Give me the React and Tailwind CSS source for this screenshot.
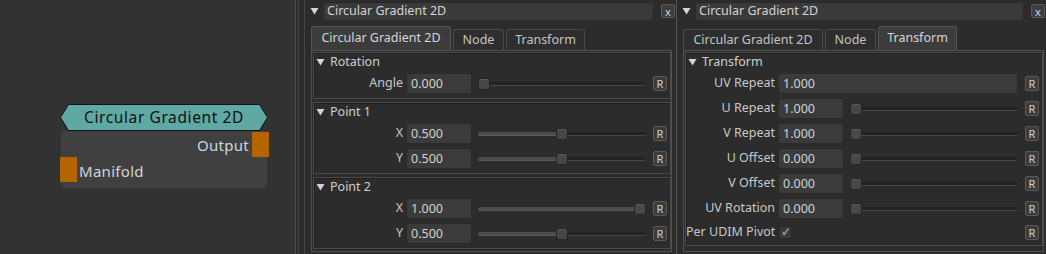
const Tri = () => (
  <svg width="9" height="8" viewBox="0 0 9 8" className="shrink-0">
    <path d="M0.5 1 L8.5 1 L4.5 7.5 Z" fill="#d4d4d4" />
  </svg>
);

const RBtn = () => (
  <div className="w-[14px] h-[15px] shrink-0 rounded-[2px] border border-[#5a5a5a] bg-[#3c3c3c] text-[#d0d0d0] text-[11px] leading-[13px] flex items-center justify-center">
    R
  </div>
);

const Slider = ({ pos }) => (
  <div className="relative flex-1 h-[14px] flex items-center">
    <div className="w-full h-[4px] rounded-full bg-[#222] border-b border-[#4a4a4a]" />
    <div
      className="absolute h-[4px] left-0 rounded-full bg-[#4c4c4c] border-b border-[#5a5a5a]"
      style={{ width: `${pos * 100}%` }}
    />
    <div
      className="absolute top-[1px] w-[12px] h-[12px] rounded-[3px] bg-[#474747] border border-[#252525] shadow-[inset_0_1px_0_#5c5c5c]"
      style={{ left: `calc(${pos * 100}% - ${pos * 12}px)` }}
    />
  </div>
);

const Field = ({ value, wide }) => (
  <div
    className={`${wide ? "flex-1" : "w-[66px]"} h-[21px] shrink-0 rounded-[2px] bg-[#3b3b3b] border border-[#2a2a2a] text-[#d2d2d2] text-[12.5px] flex items-center pl-[4px] pt-[2px]`}
  >
    {value}
  </div>
);

const Row = ({ label, value, pos, wide, h = "h-[25px]" }) => (
  <div className={`flex items-center ${h} pr-[3px]`}>
    <div className="w-[89px] shrink-0 text-right text-[#c8c8c8] text-[12.5px] whitespace-nowrap">
      {label}
    </div>
    <div className="w-[3px] shrink-0" />
    <Field value={value} wide={wide} />
    {!wide && (
      <>
        <div className="w-[6px] shrink-0" />
        <Slider pos={pos} />
      </>
    )}
    <div className="w-[7px] shrink-0" />
    <RBtn />
  </div>
);

const Group = ({ title, children }) => (
  <div className="border border-[#4c4c4c] shadow-[inset_1px_1px_0_#1f1f1f] pb-[2px]">
    <div className="h-[18px] flex items-center gap-[5px] pl-[2px] text-[#cfcfcf] text-[12.5px]">
      <Tri />
      <span>{title}</span>
    </div>
    {children}
  </div>
);

const Tabs = ({ active }) => {
  const tabs = [
    ["Circular Gradient 2D", "w-[140px]"],
    ["Node", "w-[51px]"],
    ["Transform", "w-[79px]"],
  ];
  return (
    <div className="flex items-end gap-[2px] h-[24px]">
      {tabs.map(([t, w], i) =>
        i === active ? (
          <div
            key={t}
            className={`${w} h-[24px] flex items-center justify-center rounded-t-[3px] border border-b-0 border-[#555] bg-[#3c3c3c] text-[#d6d6d6] text-[12.5px]`}
          >
            {t}
          </div>
        ) : (
          <div
            key={t}
            className={`${w} h-[21px] flex items-center justify-center rounded-t-[3px] border border-b-0 border-[#4a4a4a] bg-[#2e2e2e] text-[#c4c4c4] text-[12.5px]`}
          >
            {t}
          </div>
        ),
      )}
    </div>
  );
};

const Header = () => (
  <div className="flex items-center h-[20px] mt-[1px]">
    <div className="w-[14px] shrink-0 flex justify-start pl-[1px]">
      <Tri />
    </div>
    <div className="flex-1 h-[19px] rounded-[3px] bg-[#3a3a3a] border border-[#2a2a2a] text-[#d4d4d4] text-[12.5px] flex items-center pl-[3px]">
      Circular Gradient 2D
    </div>
    <div className="w-[7px]" />
    <div className="w-[14px] h-[14px] rounded-[2px] border border-[#5a5a5a] bg-[#3e3e3e] text-[#c0d4ea] text-[11px] leading-none flex items-center justify-center">
      x
    </div>
  </div>
);

const NodeCard = () => (
  <div className="absolute left-[60px] top-[104px] w-[208px]">
    <div className="relative h-[27px] flex items-center justify-center">
      <svg className="absolute inset-0" width="208" height="27" viewBox="0 0 208 27">
        <path
          d="M8.5 0.5 L199.5 0.5 L207.5 13.5 L199.5 26.5 L8.5 26.5 L0.5 13.5 Z"
          fill="#5fa8a4"
          stroke="#111"
          strokeWidth="1"
        />
      </svg>
      <span className="relative text-[#111] text-[15.5px] tracking-[0.6px] pt-[1px]">
        Circular Gradient 2D
      </span>
    </div>
    <div className="relative mx-[1px] h-[57px] rounded-b-[6px] bg-[#404040] text-[#cfd6dd] text-[15px] tracking-[0.3px]">
      <div className="flex justify-end items-center h-[27px] pt-[2px]">
        <span className="mr-[18px]">Output</span>
      </div>
      <div className="flex items-center h-[26px]">
        <span className="ml-[18px]">Manifold</span>
      </div>
      <div className="absolute right-[-2px] top-[1px] w-[17px] h-[25px] bg-[#b56500]" />
      <div className="absolute left-[-1px] top-[26px] w-[17px] h-[25px] bg-[#b56500]" />
    </div>
  </div>
);

export default function App() {
  return (
    <div className="flex w-[1046px] h-[254px] bg-[#2c2c2c] overflow-hidden font-['Noto_Sans',sans-serif]">
      {/* node graph */}
      <div className="relative w-[295px] shrink-0 bg-[#323232]">
        <NodeCard />
      </div>
      {/* splitter */}
      <div className="w-[1px] bg-[#4e4e4e]" />
      <div className="w-[2px]" />
      <div className="w-[1px] bg-[#444]" />
      <div className="w-[5px]" />
      <div className="w-[1px] bg-[#474747]" />

      {/* panel 1 */}
      <div className="w-[371px] shrink-0 flex flex-col pl-[4px] pr-[1px]">
        <Header />
        <div className="h-[5px]" />
        <div className="pl-[2px] pr-[3px]">
          <Tabs active={0} />
          <div className="border border-[#505050] h-[202px] p-[1px] pr-[0px] flex flex-col gap-[3px]">
            <Group title="Rotation">
              <Row label="Angle" value="0.000" pos={0} />
            </Group>
            <Group title="Point 1">
              <Row label="X" value="0.500" pos={0.5} />
              <Row label="Y" value="0.500" pos={0.5} />
            </Group>
            <Group title="Point 2">
              <Row label="X" value="1.000" pos={1} />
              <Row label="Y" value="0.500" pos={0.5} />
            </Group>
          </div>
        </div>
      </div>

      <div className="w-[1px] bg-[#555]" />

      {/* panel 2 */}
      <div className="flex-1 flex flex-col pl-[4px] pr-[1px]">
        <Header />
        <div className="h-[5px]" />
        <div className="pl-[2px] pr-[1px]">
          <Tabs active={2} />
          <div className="border border-[#505050] h-[202px] p-[1px] pr-[0px]">
            <Group title="Transform">
              <Row label="UV Repeat" value="1.000" wide />
              <Row label="U Repeat" value="1.000" pos={0} />
              <Row label="V Repeat" value="1.000" pos={0} />
              <Row label="U Offset" value="0.000" pos={0} />
              <Row label="V Offset" value="0.000" pos={0} />
              <Row label="UV Rotation" value="0.000" pos={0} />
              <div className="flex items-center h-[22px] pr-[3px]">
                <div className="w-[89px] shrink-0 text-right text-[#c8c8c8] text-[12.5px] whitespace-nowrap">
                  Per UDIM Pivot
                </div>
                <div className="w-[4px]" />
                <div className="w-[13px] h-[13px] rounded-[2px] bg-[#3b3b3b] border border-[#2a2a2a] text-[#b0b0b0] text-[12px] leading-none flex items-center justify-center">
                  ✓
                </div>
                <div className="flex-1" />
                <RBtn />
              </div>
            </Group>
          </div>
        </div>
      </div>
    </div>
  );
}
